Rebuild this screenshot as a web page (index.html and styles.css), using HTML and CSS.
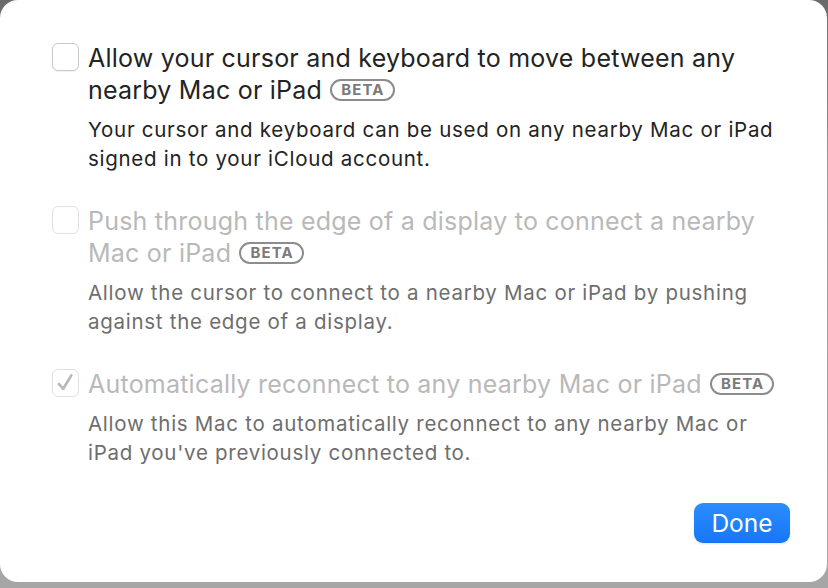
FILE: index.html
```html
<!DOCTYPE html>
<html>
<head>
    <title>Universal Control</title>
    <meta name="viewport" content="width=device-width, initial-scale=1.0">
    <link rel="stylesheet" href="styles.css">
</head>
<body>
    <div class="sheet">
        <div class="options">
            <div class="option">
                <span class="check"></span>
                <div class="text">
                    <div class="title">Allow your cursor and keyboard to move between any nearby Mac or iPad <span class="beta">BETA</span></div>
                    <div class="desc">Your cursor and keyboard can be used on any nearby Mac or iPad signed in to your iCloud account.</div>
                </div>
            </div>

            <div class="option disabled">
                <span class="check"></span>
                <div class="text">
                    <div class="title">Push through the edge of a display to connect a nearby Mac or iPad <span class="beta">BETA</span></div>
                    <div class="desc">Allow the cursor to connect to a nearby Mac or iPad by pushing against the edge of a display.</div>
                </div>
            </div>

            <div class="option disabled">
                <span class="check checked">
                    <svg viewBox="0 0 28 28" width="28" height="28"><path d="M6.5 15 L11.5 20.5 L20.5 5.5" fill="none" stroke="#b8b8b8" stroke-width="3" stroke-linecap="round" stroke-linejoin="round"/></svg>
                </span>
                <div class="text">
                    <div class="title">Automatically reconnect to any nearby Mac or iPad <span class="beta">BETA</span></div>
                    <div class="desc">Allow this Mac to automatically reconnect to any nearby Mac or iPad you've previously connected to.</div>
                </div>
            </div>
        </div>

        <div class="footer">
            <button class="done">Done</button>
        </div>
    </div>
</body>
</html>
```

FILE: styles.css
```css
html, body {
    margin: 0;
    height: 100%;
}

body {
    background: linear-gradient(180deg, #6a6a6a 0%, #9c9c9c 30%, #a6a6a6 100%);
    font-family: Inter, "Noto Sans", sans-serif;
    color: #262626;
    overflow: hidden;
}

.sheet {
    box-sizing: border-box;
    width: 827px;
    height: 582px;
    background-color: #fff;
    border-radius: 18px;
    padding: 42px 40px 0 52px;
    display: flex;
    flex-direction: column;
}

.options {
    display: flex;
    flex-direction: column;
    gap: 32px;
}

.option {
    display: flex;
    gap: 9px;
    align-items: flex-start;
}

.check {
    flex: none;
    box-sizing: border-box;
    width: 27px;
    height: 28px;
    margin-top: 1px;
    border: 1px solid #c9c9c9;
    border-radius: 6px;
    background: #fff;
    box-shadow: 0 1px 1px rgba(0, 0, 0, 0.06);
    display: flex;
    align-items: center;
    justify-content: center;
}

.check svg {
    display: block;
}

.text {
    flex: 1;
}

.title {
    font-size: 25px;
    line-height: 32px;
    letter-spacing: 0.22px;
    color: #232323;
}

.desc {
    max-width: 692px;
    margin-top: 10px;
    font-size: 20.5px;
    line-height: 28.5px;
    letter-spacing: 0.72px;
    color: #232323;
}

.beta {
    display: inline-block;
    vertical-align: 4px;
    box-sizing: border-box;
    height: 22px;
    margin-left: 1px;
    padding: 0 8px 0 9px;
    border: 2px solid #8c8c8c;
    border-radius: 11px;
    font-size: 15px;
    font-weight: 700;
    line-height: 18px;
    letter-spacing: 1.1px;
    color: #7a7a7a;
}

.disabled .title {
    color: #b9b9b9;
}

.disabled .desc {
    color: #6e6e6e;
}

.disabled .check {
    border-color: #e0e0e0;
    box-shadow: none;
}

.footer {
    display: flex;
    justify-content: flex-end;
    margin-top: auto;
    padding-bottom: 39px;
    margin-right: -3px;
}

.done {
    width: 96px;
    height: 40px;
    border: none;
    border-radius: 9px;
    background: linear-gradient(180deg, #2b8dff 0%, #1677f5 100%);
    color: #fff;
    font-family: Inter, "Noto Sans", sans-serif;
    font-size: 24.5px;
    cursor: pointer;
    box-shadow: 0 1px 2px rgba(0, 0, 0, 0.12);
}
```
